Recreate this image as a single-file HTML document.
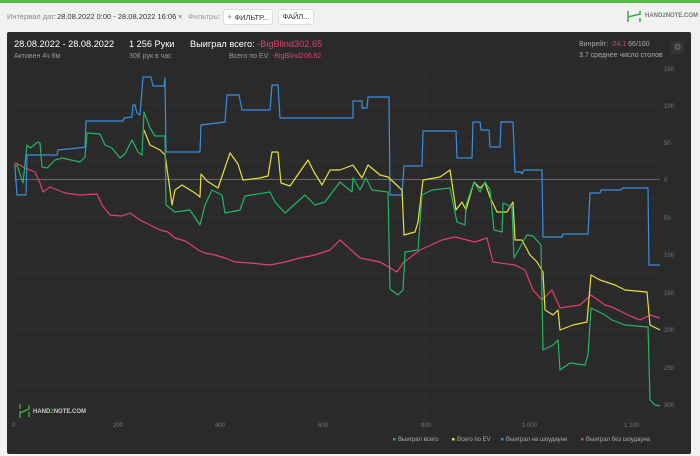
<!DOCTYPE html>
<html><head><meta charset="utf-8"><style>
*{margin:0;padding:0;box-sizing:border-box}
body{width:700px;height:456px;background:#f1f1f1;font-family:"Liberation Sans",sans-serif;position:relative;overflow:hidden}
.top{position:absolute;left:0;top:0;width:700px;height:3px;background:#5cb84a}
.t{position:absolute;white-space:nowrap}
.btn{position:absolute;background:#fff;border:1px solid #ddd;border-radius:3px;font-size:7.5px;color:#333;text-align:center;line-height:14px;height:16px}
.card{position:absolute;left:7px;top:32px;width:684px;height:422px;background:#2a2a2a;border-radius:2px}
</style></head><body>
<div class="top"></div>
<div class="t" style="left:7px;top:12px;font-size:7.5px;color:#888">Интервал дат:</div>
<div class="t" style="left:57px;top:12px;font-size:7.5px;color:#333">28.08.2022 0:00 - 28.08.2022 16:06 <span style="color:#999">▾</span></div>
<div class="t" style="left:188px;top:12px;font-size:7.5px;color:#999">Фильтры:</div>
<div class="btn" style="left:223px;top:9px;width:50px"><span style="color:#888;font-size:9px">+</span> ФИЛЬТР...</div>
<div class="btn" style="left:278px;top:9px;width:36px">ФАЙЛ...</div>
<svg style="position:absolute;left:627px;top:10px" width="14" height="13" viewBox="0 0 14 13"><path d="M1 1V5M1 5V12M1 7L13 4M13 1V5M13 8V12" stroke="#3bb44a" stroke-width="1.6" fill="none"/></svg>
<div class="t" style="left:645px;top:13px;font-size:6px;color:#777;font-weight:bold">HAND<span style="color:#3bb44a">2</span>NOTE.COM</div>
<div class="card"></div>
<div class="t" style="left:14px;top:39px;font-size:9.2px;color:#fff">28.08.2022 - 28.08.2022</div>
<div class="t" style="left:14px;top:53px;font-size:7px;color:#999">Активен 4ч 6м</div>
<div class="t" style="left:129px;top:39px;font-size:9.2px;color:#fff">1 256 Руки</div>
<div class="t" style="left:129px;top:53px;font-size:7px;color:#999">306 рук в час</div>
<div class="t" style="left:190px;top:39px;font-size:9.2px;color:#fff">Выиграл всего: <span style="color:#e0406f">-BigBlind302.65</span></div>
<div class="t" style="left:229px;top:53px;font-size:7px;color:#999">Всего по EV: <span style="color:#e0406f">-BigBlind206.62</span></div>
<div class="t" style="left:579px;top:41px;font-size:7px;color:#aaa">Винрейт: <span style="color:#e0406f">-24.1</span> 66/100</div>
<div class="t" style="left:579px;top:52px;font-size:7px;color:#aaa">3.7 среднее число столов</div>
<div style="position:absolute;left:671px;top:41px;width:13px;height:13px;border-radius:2px;background:#333;color:#777;font-size:9px;text-align:center;line-height:13px">⚙</div>
<svg style="position:absolute;left:0;top:0" width="700" height="456">
<g stroke="#333" stroke-width="0.7">
<path d="M14 67H660M14 86H660M14 105H660M14 123H660M14 142H660M14 161H660M14 198H660M14 217H660M14 236H660M14 254H660M14 273H660M14 292H660M14 310H660M14 329H660M14 348H660M14 366H660M14 385H660M14 404H660M14 420H660"/>
<path d="M117 67V420M219 67V420M322 67V420M425 67V420M528 67V420M630 67V420"/>
</g>
<path d="M14 179.5H660" stroke="#666" stroke-width="1"/>
<g fill="#777" font-size="6" font-family="Liberation Sans">
<text x="664" y="71">150</text><text x="664" y="108">100</text><text x="664" y="145">50</text><text x="664" y="182">0</text><text x="664" y="220">50</text><text x="664" y="257">100</text><text x="664" y="295">150</text><text x="664" y="332">200</text><text x="664" y="370">250</text><text x="664" y="407">300</text>
<text x="12" y="427">0</text><text x="113" y="427">200</text><text x="215" y="427">400</text><text x="318" y="427">600</text><text x="421" y="427">800</text><text x="522" y="427">1 000</text><text x="624" y="427">1 200</text>
</g>
<g fill="none" stroke-width="1.2" stroke-linejoin="round">
<polyline stroke="#3a8ee0" points="15,167 17,195 26,195 27,155 57,155 58,150 78,148 85,147 86,121 123,121 124,118 132,117 133,105 135,105 137,113 140,115 143,77 151,77 153,86 164,86 165,78 166,152 200,152 201,125 225,122 227,95 239,95 242,110 270,110 272,85 278,85 280,118 353,118 353,101 362,101 362,108 367,108 368,97 389,97 390,195 402,195 404,166 422,166 423,131 456,131 457,158 472,158 473,122 480,122 481,130 489,130 490,147 500,147 501,122 513,122 515,172 521,172 522,174 524,170 542,170 543,237 562,237 563,234 588,234 590,193 600,193 601,190 621,190 623,188 648,188 649,265 660,265"/>
<polyline stroke="#e0406f" points="14,165 16,163 25,168 35,172 40,183 43,192 50,187 65,193 80,195 97,194 102,205 110,215 122,216 130,213 140,220 150,225 160,230 168,232 175,238 185,241 190,244 198,250 205,253 215,255 225,258 235,262 250,263 270,265 285,262 300,258 315,255 330,250 340,240 360,258 380,262 397,272 403,263 420,250 442,240 455,237 475,242 487,238 493,262 515,265 525,270 533,290 542,300 552,290 560,308 580,305 591,295 605,305 612,307 628,315 640,320 650,315 660,318"/>
<polyline stroke="#e8e040" points="144,130 150,145 160,150 165,155 170,190 172,205 175,190 182,185 195,193 200,197 201,174 207,181 218,188 230,153 238,164 243,180 260,178 268,176 272,152 278,152 281,183 290,186 308,160 314,172 322,185 330,170 340,170 353,165 362,178 368,165 380,175 388,177 402,190 404,235 415,232 418,222 423,180 440,177 450,170 456,210 462,202 466,210 474,182 480,188 485,183 490,197 497,212 507,212 513,202 515,240 522,240 530,255 537,262 543,272 545,310 553,315 558,310 560,330 573,325 587,322 591,275 600,280 615,285 625,290 647,292 650,325 660,330"/>
<polyline stroke="#22b565" points="14,167 17,165 23,183 27,145 30,148 38,142 40,143 42,167 47,168 55,160 62,158 80,162 85,157 87,133 100,134 105,145 112,148 120,158 125,154 132,140 138,152 142,155 144,112 150,128 155,136 165,136 166,205 175,212 190,210 200,225 205,205 212,190 222,195 225,213 240,210 245,196 270,192 275,202 285,213 305,195 315,205 325,202 340,182 352,192 353,178 360,190 366,178 372,190 388,192 390,289 398,295 403,290 405,252 418,250 422,195 432,190 450,188 457,222 465,225 466,205 474,182 480,192 485,182 490,190 494,230 502,232 503,203 512,207 514,258 527,235 533,236 541,245 543,350 553,345 558,340 560,370 570,363 585,365 588,355 591,308 605,315 612,320 625,325 648,327 650,400 655,405 660,406"/>
</g>
<g font-size="6" font-family="Liberation Sans" fill="#aaa">
<rect x="393" y="438" width="2.5" height="2.5" fill="#22b565"/><text x="398" y="441">Выиграл всего</text>
<rect x="452" y="438" width="2.5" height="2.5" fill="#e8e040"/><text x="457" y="441">Всего по EV</text>
<rect x="501" y="438" width="2.5" height="2.5" fill="#3a8ee0"/><text x="506" y="441">Выиграл на шоудауне</text>
<rect x="581" y="438" width="2.5" height="2.5" fill="#e0406f"/><text x="586" y="441">Выиграл без шоудауна</text>
</g>
<path d="M20 404V409M20 411V418M20 413L29 409M29 405V409M29 412V417" stroke="#3bb44a" stroke-width="1.3" fill="none"/>
<text x="33" y="413" font-size="6" font-weight="bold" fill="#ccc" font-family="Liberation Sans">HAND<tspan fill="#3bb44a">2</tspan>NOTE.COM</text>
</svg>
</body></html>
